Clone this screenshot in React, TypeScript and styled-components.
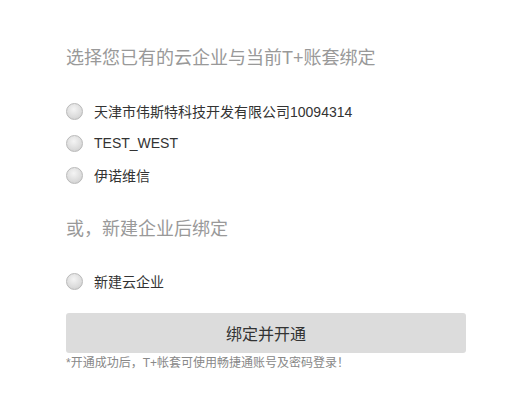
import { useState } from 'react'
import styled, { createGlobalStyle } from 'styled-components'

const GlobalStyle = createGlobalStyle`
  body {
    margin: 0;
    background: #fff;
    font-family: "Liberation Sans", Arial, "Noto Sans CJK SC", sans-serif;
  }
`

const existing = ['天津市伟斯特科技开发有限公司10094314', 'TEST_WEST', '伊诺维信']

export default function App() {
  const [selected, setSelected] = useState<string | null>(null)

  return (
    <>
      <GlobalStyle />
      <Wrapper>
        <Heading>选择您已有的云企业与当前T+账套绑定</Heading>
        <List $gap={25}>
          {existing.map(name => (
            <Option key={name} onClick={() => setSelected(name)}>
              <Radio $checked={selected === name} />
              <Label>{name}</Label>
            </Option>
          ))}
        </List>
        <Heading $top={26}>或，新建企业后绑定</Heading>
        <List $gap={24}>
          <Option onClick={() => setSelected('new')}>
            <Radio $checked={selected === 'new'} />
            <Label>新建云企业</Label>
          </Option>
        </List>
        <SubmitButton>绑定并开通</SubmitButton>
        <Note>*开通成功后，T+帐套可使用畅捷通账号及密码登录！</Note>
      </Wrapper>
    </>
  )
}

const Wrapper = styled.div`
  display: flex;
  flex-direction: column;
  width: 400px;
  padding: 46px 0 0 66px;
`
const Heading = styled.div<{ $top?: number }>`
  margin-top: ${p => p.$top ?? 0}px;
  font-size: 18px;
  line-height: 24px;
  color: #999;
`
const List = styled.div<{ $gap: number }>`
  display: flex;
  flex-direction: column;
  margin-top: ${p => p.$gap}px;
`
const Option = styled.label`
  display: flex;
  align-items: center;
  height: 32px;
  cursor: pointer;
`
const Radio = styled.span<{ $checked: boolean }>`
  box-sizing: border-box;
  width: 17px;
  height: 17px;
  border-radius: 50%;
  border: 1px solid #b9b9b9;
  background: radial-gradient(circle at 45% 35%, #f4f4f4 0%, #dcdcdc 60%, #c8c8c8 100%);
  margin-right: 11px;
  position: relative;

  &::after {
    content: '';
    display: ${p => (p.$checked ? 'block' : 'none')};
    position: absolute;
    left: 4px;
    top: 4px;
    width: 7px;
    height: 7px;
    border-radius: 50%;
    background: #555;
  }
`
const Label = styled.span`
  font-size: 14px;
  color: #333;
`
const SubmitButton = styled.button`
  margin-top: 16px;
  width: 400px;
  height: 40px;
  border: none;
  border-radius: 3px;
  background: #dcdcdc;
  color: #333;
  font-family: inherit;
  font-size: 16px;
  cursor: pointer;
`
const Note = styled.div`
  margin-top: 2px;
  font-size: 12px;
  line-height: 16px;
  color: #888;
`
